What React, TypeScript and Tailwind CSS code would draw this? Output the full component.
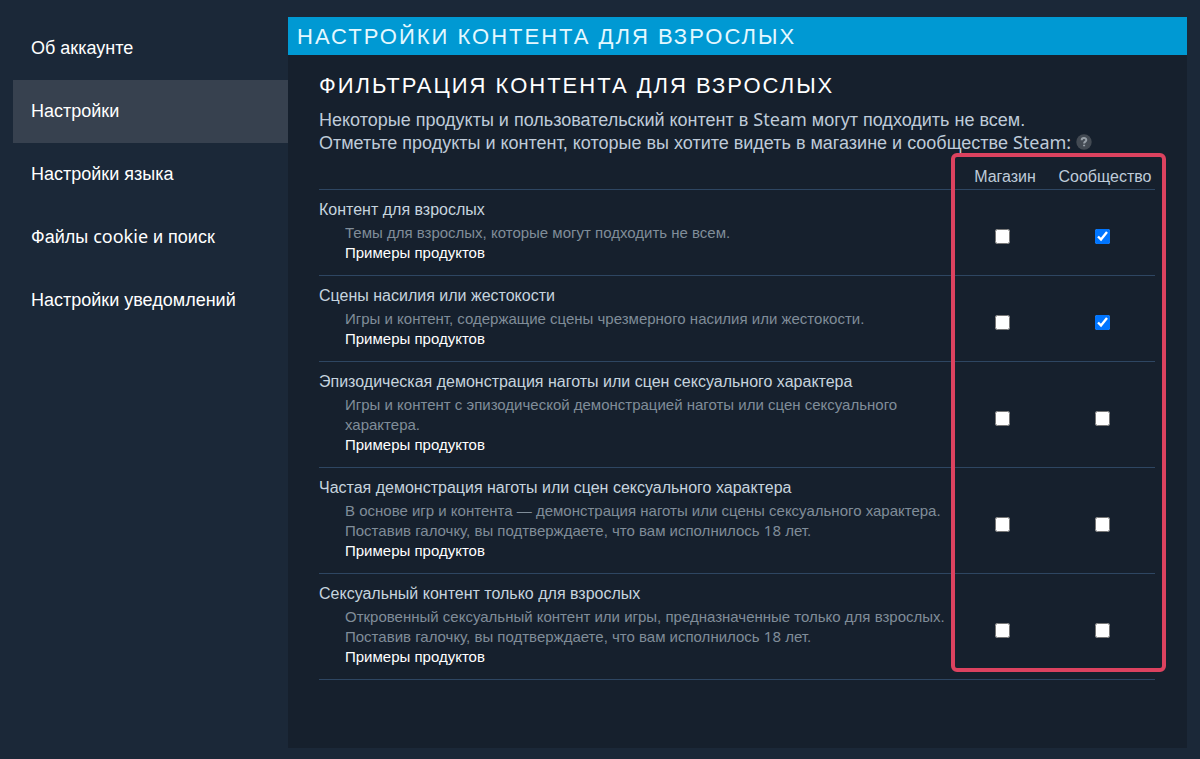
import { Fragment, useState } from "react";

type Filter = {
  id: string;
  title: string;
  lines: string[];
  store: boolean;
  community: boolean;
};

const NAV = [
  "Об аккаунте",
  "Настройки",
  "Настройки языка",
  "Файлы cookie и поиск",
  "Настройки уведомлений",
];

const FILTERS: Filter[] = [
  {
    id: "mature",
    title: "Контент для взрослых",
    lines: ["Темы для взрослых, которые могут подходить не всем."],
    store: false,
    community: true,
  },
  {
    id: "violence",
    title: "Сцены насилия или жестокости",
    lines: ["Игры и контент, содержащие сцены чрезмерного насилия или жестокости."],
    store: false,
    community: true,
  },
  {
    id: "some-nudity",
    title: "Эпизодическая демонстрация наготы или сцен сексуального характера",
    lines: ["Игры и контент с эпизодической демонстрацией наготы или сцен сексуального характера."],
    store: false,
    community: false,
  },
  {
    id: "frequent-nudity",
    title: "Частая демонстрация наготы или сцен сексуального характера",
    lines: [
      "В основе игр и контента — демонстрация наготы или сцены сексуального характера.",
      "Поставив галочку, вы подтверждаете, что вам исполнилось 18 лет.",
    ],
    store: false,
    community: false,
  },
  {
    id: "adult-only",
    title: "Сексуальный контент только для взрослых",
    lines: [
      "Откровенный сексуальный контент или игры, предназначенные только для взрослых.",
      "Поставив галочку, вы подтверждаете, что вам исполнилось 18 лет.",
    ],
    store: false,
    community: false,
  },
];

/* Latin words and digits use the humanist face, Cyrillic stays in the base one. */
function Mixed({ text }: { text: string }) {
  return (
    <>
      {text.split(/([A-Za-z0-9:]+)/).map((part, i) =>
        i % 2 ? (
          <span key={i} className="font-['Noto_Sans',sans-serif] leading-none">
            {part}
          </span>
        ) : (
          <Fragment key={i}>{part}</Fragment>
        ),
      )}
    </>
  );
}

function Check({ label, initial }: { label: string; initial: boolean }) {
  const [on, setOn] = useState(initial);
  return (
    <td className="pt-2 pr-1.5 text-center align-middle">
      <input
        type="checkbox"
        aria-label={label}
        checked={on}
        onChange={(e) => setOn(e.target.checked)}
        className="mx-auto block size-[15px]"
      />
    </td>
  );
}

export default function App() {
  return (
    <div className="flex min-h-screen bg-[#1b2838] pt-[17px] pr-[13px] pb-[11px] pl-[13px] font-['Liberation_Sans',Arial,sans-serif] text-white">
      <nav className="flex w-[275px] shrink-0 flex-col text-lg leading-[23px]">
        {NAV.map((item) => (
          <a
            key={item}
            href="#"
            aria-current={item === "Настройки" ? "page" : undefined}
            className="px-[18px] py-5 aria-[current=page]:bg-[#37414f]"
          >
            <Mixed text={item} />
          </a>
        ))}
      </nav>

      <main className="min-w-0 flex-1 bg-[#16202d]">
        <h1 className="bg-[#0099d3] px-[9px] pt-[5px] pb-[3px] text-[22px] leading-[30px] tracking-[2px] text-[#e4f8ff] uppercase">
          Настройки контента для взрослых
        </h1>
        <section className="pt-4 pr-8 pl-[31px]">
          <h2 className="text-[22px] leading-[30px] tracking-[2px] uppercase">
            Фильтрация контента для взрослых
          </h2>
          <p className="mt-2 text-lg leading-[23px] text-[#bfcbd9]">
            <Mixed text="Некоторые продукты и пользовательский контент в Steam могут подходить не всем." />
            <br />
            <Mixed text="Отметьте продукты и контент, которые вы хотите видеть в магазине и сообществе Steam:" />
            <button
              type="button"
              aria-label="Справка"
              className="ml-[5px] inline-block size-4 align-[-1px]"
            >
              <svg viewBox="0 0 16 16" className="block size-4" aria-hidden="true">
                <circle cx="8" cy="8" r="7.7" fill="#434a53" />
                <path
                  d="M5.7 6.2C5.7 3.3 10.3 3.3 10.3 6C10.3 7.7 8.1 7.6 8.1 9.5M8.1 10.8V12.3"
                  fill="none"
                  stroke="#979fa7"
                  strokeWidth="2"
                />
              </svg>
            </button>
          </p>

          <div className="relative mt-2.5">
            <table className="w-full table-fixed border-collapse">
              <thead>
                <tr className="border-b border-[#2e4662] leading-6 text-[#bfcbd9]">
                  <td />
                  <th scope="col" className="w-[100px] font-normal">
                    Магазин
                  </th>
                  <th scope="col" className="w-[100px] font-normal">
                    Сообщество
                  </th>
                </tr>
              </thead>
              <tbody>
                {FILTERS.map((f) => (
                  <tr key={f.id} className="border-b border-[#2e4662]">
                    <td className="pt-2 pb-3">
                      <h3 className="pb-px text-base leading-6 text-[#c6d4df]">{f.title}</h3>
                      <div className="pr-2 pl-[26px] text-[15px] leading-5 text-[#808d99]">
                        {f.lines.map((line) => (
                          <p key={line}>
                            <Mixed text={line} />
                          </p>
                        ))}
                        <a href="#" className="block text-white">
                          Примеры продуктов
                        </a>
                      </div>
                    </td>
                    <Check label={`${f.title}: магазин`} initial={f.store} />
                    <Check label={`${f.title}: сообщество`} initial={f.community} />
                  </tr>
                ))}
              </tbody>
            </table>
            <div className="pointer-events-none absolute -top-3 -right-[11px] bottom-2 w-[215px] rounded-md border-4 border-[#dc425f]" />
          </div>
        </section>
      </main>
    </div>
  );
}
